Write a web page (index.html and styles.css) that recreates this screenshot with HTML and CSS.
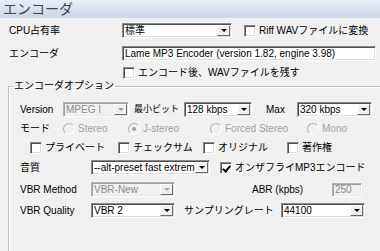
FILE: index.html
```html
<!DOCTYPE html>
<html lang="ja">

<head>
    <meta charset="UTF-8">
    <title>エンコーダ</title>
    <link rel="stylesheet" href="styles.css">
</head>

<body>
    <div class="title">エンコーダ</div>

    <div class="row r1">
        <span class="lbl w-top">CPU占有率</span>
        <div class="combo cpu"><span class="val">標準</span><span class="btn"></span></div>
        <span class="chk ml12"></span><span class="ctext">Riff WAVファイルに変換</span>
    </div>

    <div class="row r2">
        <span class="lbl w-top">エンコーダ</span>
        <div class="edit enc">Lame MP3 Encoder (version 1.82, engine 3.98)</div>
    </div>

    <div class="row r3">
        <span class="chk"></span><span class="ctext">エンコード後、WAVファイルを残す</span>
    </div>

    <fieldset class="group">
        <legend>エンコーダオプション</legend>

        <div class="row g1">
            <span class="lbl w43">Version</span>
            <div class="combo off w66"><span class="val">MPEG I</span><span class="btn"></span></div>
            <span class="lbl w50 ml5 small">最小ビット</span>
            <div class="combo w68"><span class="val">128 kbps</span><span class="btn"></span></div>
            <span class="lbl w31 ml14">Max</span>
            <div class="combo w75"><span class="val">320 kbps</span><span class="btn"></span></div>
        </div>

        <div class="row g2">
            <span class="lbl w43">モード</span>
            <span class="opt w65"><span class="radio"></span><span class="ctext off-t">Stereo</span></span>
            <span class="opt w82"><span class="radio on"></span><span class="ctext off-t">J-stereo</span></span>
            <span class="opt w97"><span class="radio"></span><span class="ctext off-t">Forced Stereo</span></span>
            <span class="opt"><span class="radio"></span><span class="ctext off-t">Mono</span></span>
        </div>

        <div class="row g3">
            <span class="opt w88"><span class="chk"></span><span class="ctext">プライベート</span></span>
            <span class="opt w85"><span class="chk"></span><span class="ctext">チェックサム</span></span>
            <span class="opt w84"><span class="chk"></span><span class="ctext">オリジナル</span></span>
            <span class="opt"><span class="chk"></span><span class="ctext">著作権</span></span>
        </div>

        <div class="row g4">
            <span class="lbl w71">音質</span>
            <div class="combo w119"><span class="val">--alt-preset fast extreme</span><span class="btn"></span></div>
            <span class="chk checked ml10"></span><span class="ctext">オンザフライMP3エンコード</span>
        </div>

        <div class="row g5">
            <span class="lbl w71">VBR Method</span>
            <div class="combo off w84"><span class="val">VBR-New</span><span class="btn"></span></div>
            <span class="lbl w80 ml77">ABR (kpbs)</span>
            <div class="edit off abr">250</div>
        </div>

        <div class="row g6">
            <span class="lbl w71">VBR Quality</span>
            <div class="combo w84"><span class="val">VBR 2</span><span class="btn"></span></div>
            <span class="lbl w97 ml9">サンプリングレート</span>
            <div class="combo w84"><span class="val">44100</span><span class="btn"></span></div>
        </div>
    </fieldset>
</body>

</html>
```

FILE: styles.css
```css
* {
    box-sizing: border-box;
}

body {
    margin: 0;
    width: 380px;
    height: 251px;
    overflow: hidden;
    background: #f0f0f0;
    color: #000;
    font: 10px/15px "Liberation Sans", "Noto Sans CJK JP", sans-serif;
}

.title {
    height: 18px;
    padding-left: 3px;
    font-size: 14px;
    line-height: 18px;
    color: #444;
    background: linear-gradient(#e8eef7, #c8d5e6);
}

.row {
    display: flex;
    align-items: center;
    height: 15px;
    white-space: nowrap;
}

.r1 {
    margin-top: 5px;
    padding-left: 9px;
}

.r2 {
    margin-top: 8px;
    padding-left: 9px;
}

.r3 {
    margin-top: 5px;
    height: 13px;
    padding-left: 123px;
}

.lbl {
    flex: none;
}

.small {
    font-size: 9px;
}

.w-top { width: 113px; }
.w31 { width: 31px; }
.w43 { width: 43px; }
.w50 { width: 50px; }
.w65 { width: 65px; }
.w66 { width: 66px; }
.w68 { width: 68px; }
.w71 { width: 71px; }
.w75 { width: 75px; }
.w80 { width: 80px; }
.w82 { width: 82px; }
.w84 { width: 84px; }
.w85 { width: 85px; }
.w88 { width: 88px; }
.w97 { width: 97px; }
.w119 { width: 119px; }
.ml5 { margin-left: 5px; }
.ml9 { margin-left: 9px; }
.ml10 { margin-left: 10px; }
.ml12 { margin-left: 12px; }
.ml14 { margin-left: 14px; }
.ml77 { margin-left: 77px; }

/* sunken boxes */
.combo,
.edit {
    flex: none;
    display: flex;
    align-items: center;
    height: 15px;
    background: #fff;
    border: 1px solid;
    border-color: #8a8a8a #fff #fff #8a8a8a;
    box-shadow: inset 1px 1px 0 #505050, inset -1px -1px 0 #dcdcdc;
    overflow: hidden;
}

.cpu {
    width: 110px;
}

.enc {
    width: 254px;
    padding-left: 2px;
}

.combo .val {
    flex: 1;
    min-width: 0;
    padding-left: 2px;
    overflow: hidden;
    text-overflow: clip;
}

.combo .btn {
    position: relative;
    flex: none;
    width: 13px;
    height: 11px;
    margin-right: 1px;
    background: #f0f0f0;
    border: 1px solid;
    border-color: #fff #6a6a6a #6a6a6a #fff;
}

.combo .btn::after {
    content: "";
    position: absolute;
    left: 3px;
    top: 3px;
    border-left: 3px solid transparent;
    border-right: 3px solid transparent;
    border-top: 3px solid #000;
}

.combo.off,
.edit.off {
    background: #f0f0f0;
    color: #8d8d8d;
    border-color: #b4b4b4 #fff #fff #b4b4b4;
    box-shadow: inset 1px 1px 0 #a0a0a0, inset -1px -1px 0 #e6e6e6;
}

.combo.off .btn::after {
    border-top-color: #a0a0a0;
}

.abr {
    width: 30px;
    height: 14px;
    padding-left: 2px;
}

.chk {
    flex: none;
    position: relative;
    width: 12px;
    height: 12px;
    background: #fff;
    border: 1px solid;
    border-color: #8a8a8a #fff #fff #8a8a8a;
    box-shadow: inset 1px 1px 0 #505050, inset -1px -1px 0 #dcdcdc;
}

.chk.checked::after {
    content: "";
    position: absolute;
    left: 3px;
    top: 1px;
    width: 3px;
    height: 6px;
    border: solid #000;
    border-width: 0 2px 2px 0;
    transform: rotate(40deg);
}

.ctext {
    margin-left: 3px;
}

.off-t {
    color: #a0a0a0;
}

.opt {
    flex: none;
    display: flex;
    align-items: center;
}

.radio {
    flex: none;
    position: relative;
    width: 12px;
    height: 12px;
    border-radius: 50%;
    border: 1px solid #b0b0b0;
    border-bottom-color: #fff;
    border-right-color: #fff;
    background: #f0f0f0;
}

.radio.on::after {
    content: "";
    position: absolute;
    left: 3px;
    top: 3px;
    width: 4px;
    height: 4px;
    border-radius: 50%;
    background: #a0a0a0;
}

.group {
    margin: 0 0 0 8px;
    padding: 0;
    width: 380px;
    height: 173px;
    border: 1px solid #bdbdbd;
    box-shadow: inset 1px 1px 0 #fff;
}

.group legend {
    margin-left: 4px;
    padding: 0 1px;
    font-size: 10px;
    line-height: 14px;
}

.group .row {
    padding-left: 11px;
}

.g1 { margin-top: 9px; }
.g2 { margin-top: 4px; }
.g3 { margin-top: 4px; padding-left: 21px !important; }
.g4 { margin-top: 5px; }
.g5 { margin-top: 7px; }
.g6 { margin-top: 6px; }
```
